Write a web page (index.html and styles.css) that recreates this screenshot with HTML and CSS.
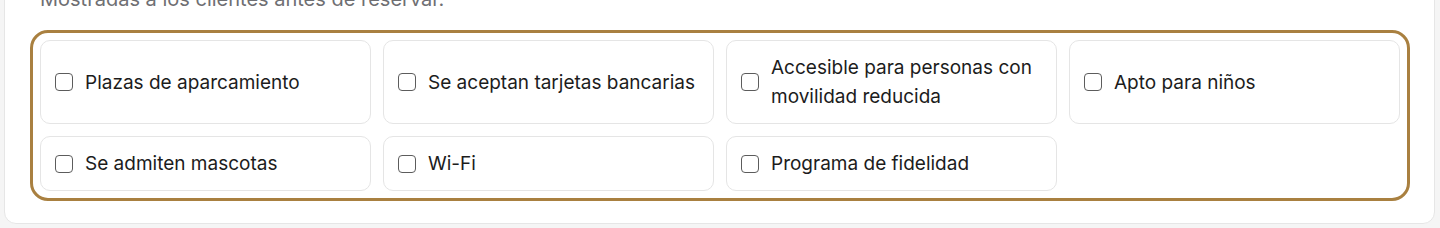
FILE: index.html
```html
<!DOCTYPE html>
<html lang="es">
<head>
    <meta charset="UTF-8">
    <meta name="viewport" content="width=device-width, initial-scale=1.0">
    <title>Servicios</title>
    <link rel="stylesheet" href="styles.css">
</head>
<body>
    <div class="card">
        <p class="hint">Mostradas a los clientes antes de reservar.</p>

        <div class="amenities highlighted">
            <label class="amenity"><input type="checkbox"> <span>Plazas de aparcamiento</span></label>
            <label class="amenity"><input type="checkbox"> <span>Se aceptan tarjetas bancarias</span></label>
            <label class="amenity"><input type="checkbox"> <span>Accesible para personas con movilidad reducida</span></label>
            <label class="amenity"><input type="checkbox"> <span>Apto para niños</span></label>
            <label class="amenity"><input type="checkbox"> <span>Se admiten mascotas</span></label>
            <label class="amenity"><input type="checkbox"> <span>Wi-Fi</span></label>
            <label class="amenity"><input type="checkbox"> <span>Programa de fidelidad</span></label>
        </div>
    </div>
</body>
</html>
```

FILE: styles.css
```css
body {
    margin: 0;
    background-color: #f5f5f5;
    font-family: Inter, "Noto Sans", sans-serif;
    color: #1c1c1c;
}
.card {
    margin: -16px 5px 0 4px;
    padding: 0 34px 32px 35px;
    background-color: #fff;
    border: 1px solid #e6e6e6;
    border-radius: 12px;
}
.hint {
    margin: 0 0 27px;
    font-size: 20px;
    line-height: 28px;
    color: #6f6f73;
}
.amenities {
    display: grid;
    grid-template-columns: repeat(4, 1fr);
    gap: 12px;
    border-radius: 8px;
}
/* anillo dorado alrededor de la sección */
.amenities.highlighted {
    outline: 3px solid #a98040;
    outline-offset: 7px;
}
.amenity {
    display: flex;
    align-items: center;
    gap: 12px;
    padding: 12px 14px;
    border: 1px solid #e5e5e5;
    border-radius: 10px;
    font-size: 19px;
    line-height: 29px;
    cursor: pointer;
}
.amenity input {
    appearance: none;
    flex-shrink: 0;
    width: 18px;
    height: 18px;
    margin: 0;
    border: 1.5px solid #5c5c5c;
    border-radius: 4px;
    background-color: #fff;
}
```
